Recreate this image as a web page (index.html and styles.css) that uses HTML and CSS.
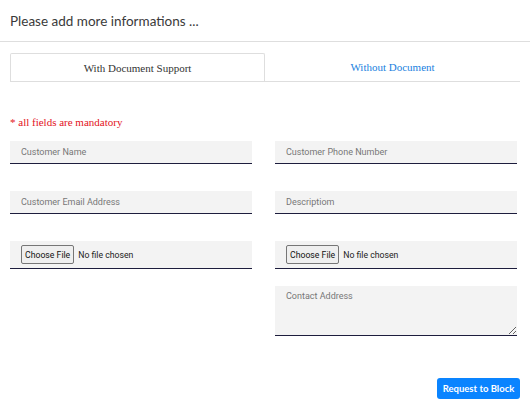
FILE: index.html
```html
<!DOCTYPE html>
<html>
<head>
<meta charset="utf-8">
<link rel="stylesheet" href="styles.css">
</head>
<body>
<div class="modal">
  <div class="header">
    <h1 class="title">Please add more informations ...</h1>
  </div>
  <div class="tabs">
    <div class="tab active">With Document Support</div>
    <div class="tab link">Without Document</div>
  </div>
  <p class="mandatory">* all fields are mandatory</p>
  <form class="form">
    <div class="col">
      <input class="field" type="text" placeholder="Customer Name">
      <input class="field" type="text" placeholder="Customer Email Address">
      <div class="field file"><input type="file"></div>
    </div>
    <div class="col">
      <input class="field" type="text" placeholder="Customer Phone Number">
      <input class="field" type="text" placeholder="Descriptiom">
      <div class="field file"><input type="file"></div>
      <textarea class="field area" placeholder="Contact Address"></textarea>
    </div>
  </form>
  <div class="actions">
    <button class="btn" type="button">Request to Block</button>
  </div>
</div>
</body>
</html>
```

FILE: styles.css
```css
* { box-sizing: border-box; }
body {
  margin: 0;
  background: #fff;
  font-family: "Lato", "Liberation Sans", sans-serif;
}
.header {
  height: 42px;
  padding: 0 10px;
  border-bottom: 1px solid #dedede;
  display: flex;
  align-items: center;
}
.title {
  margin: 0;
  font-size: 13.5px;
  font-weight: 400;
  color: #3a3a3a;
}
.tabs {
  margin: 11px 10px 0;
  display: grid;
  grid-template-columns: 1fr 1fr;
  border-bottom: 1px solid #dedede;
}
.tab {
  height: 28px;
  display: flex;
  align-items: center;
  justify-content: center;
  font-family: "Liberation Serif", serif;
  font-size: 11px;
}
.tab.active {
  border: 1px solid #dedede;
  border-bottom: none;
  border-radius: 2px 2px 0 0;
  color: #333;
}
.tab.link { color: #1a7fe0; }
.mandatory {
  margin: 34px 10px 0;
  font-family: "Liberation Serif", serif;
  font-size: 11px;
  color: #e3121c;
  line-height: 13px;
}
.form {
  margin: 12px 13px 0 10px;
  display: grid;
  grid-template-columns: 1fr 1fr;
  column-gap: 23px;
}
.col { display: flex; flex-direction: column; }
.field {
  display: block;
  width: 100%;
  height: 23px;
  margin: 0 0 27px;
  padding: 0 11px;
  border: none;
  border-bottom: 1.5px solid #1d1d3d;
  background: #f3f3f3;
  font-family: "Roboto", "Liberation Sans", sans-serif;
  font-size: 9px;
  color: #333;
  outline: none;
}
.field::placeholder { color: #777; }
.field.file {
  height: 28px;
  margin-bottom: 17px;
  display: flex;
  align-items: center;
}
.file input {
  font-family: "Roboto", "Liberation Sans", sans-serif;
  font-size: 8.7px;
  color: #222;
}
.file input::file-selector-button {
  font-family: "Roboto", "Liberation Sans", sans-serif;
  font-size: 8.7px;
  height: 19px;
  padding: 0 3px;
  margin-right: 4px;
  border: 1px solid #767676;
  border-radius: 2px;
  background: #efefef;
  color: #111;
}
.field.area {
  height: 50px;
  margin-bottom: 0;
  padding: 5px 11px;
  resize: vertical;
}
.actions {
  display: flex;
  justify-content: flex-end;
  padding: 0 10px;
  margin-top: 42px;
}
.btn {
  width: 83px;
  height: 21px;
  border: none;
  border-radius: 3px;
  background: #0a84ff;
  color: #fff;
  font-family: "Lato", "Liberation Sans", sans-serif;
  font-weight: 700;
  font-size: 9.5px;
  padding: 0;
}
```
